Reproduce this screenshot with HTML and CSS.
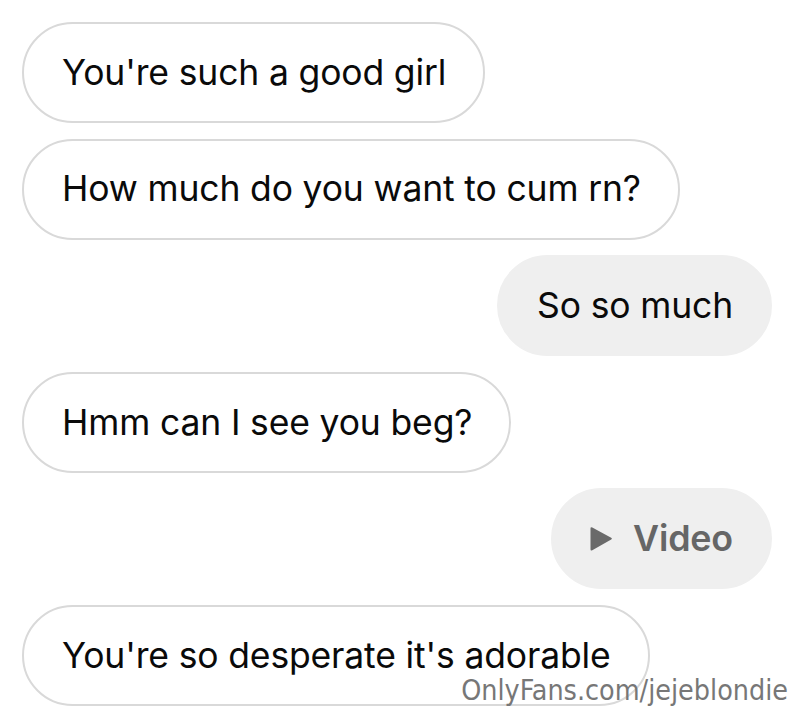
FILE: index.html
```html
<!DOCTYPE html>
<html lang="en">
<head>
<meta charset="utf-8">
<title>Chat</title>
<link rel="stylesheet" href="styles.css">
</head>
<body>
<div class="chat">
  <div class="bubble in">You're such a good girl</div>
  <div class="bubble in">How much do you want to cum rn?</div>
  <div class="bubble out">So so much</div>
  <div class="bubble in">Hmm can I see you beg?</div>
  <div class="bubble out video">
    <svg class="play" width="24" height="26" viewBox="0 0 24 26" aria-hidden="true"><path d="M1.5 2.6 Q1.5 0.6 3.3 1.6 L22.2 11.7 Q23.8 12.6 22.2 13.5 L3.3 24.2 Q1.5 25.2 1.5 23.2 Z" fill="#6a6a6a"/></svg>
    <span>Video</span>
  </div>
  <div class="bubble in">You're so desperate it's adorable</div>
  <div class="watermark">OnlyFans.com/jejeblondie</div>
</div>
</body>
</html>
```

FILE: styles.css
```css
html, body {
  margin: 0;
  padding: 0;
  background: #ffffff;
}

body {
  width: 800px;
  height: 713px;
  overflow: hidden;
  font-family: Inter, "Liberation Sans", Arial, sans-serif;
}

.chat {
  position: relative;
  height: 713px;
  box-sizing: border-box;
  padding: 22px 28px 0 22px;
  display: flex;
  flex-direction: column;
  gap: 15.6px;
}

.bubble {
  box-sizing: border-box;
  height: 101px;
  display: flex;
  align-items: center;
  padding: 0 37px 0 38px;
  border-radius: 51px;
  font-size: 35.5px;
  letter-spacing: -0.15px;
  color: #0a0a0a;
  white-space: nowrap;
  line-height: 1;
}

.bubble.in {
  align-self: flex-start;
  background: #ffffff;
  border: 2px solid #d9d9d9;
}

.bubble.out {
  align-self: flex-end;
  background: #efefef;
  border: 2px solid #efefef;
}

.bubble.video {
  gap: 20px;
  padding-left: 36px;
  color: #666666;
  font-weight: 600;
  font-size: 35.8px;
}

.play {
  display: block;
}

.watermark {
  position: absolute;
  right: 12px;
  bottom: 6px;
  font-family: "DejaVu Sans", sans-serif;
  font-stretch: condensed;
  font-size: 28.4px;
  color: #777777;
  white-space: nowrap;
}
```
